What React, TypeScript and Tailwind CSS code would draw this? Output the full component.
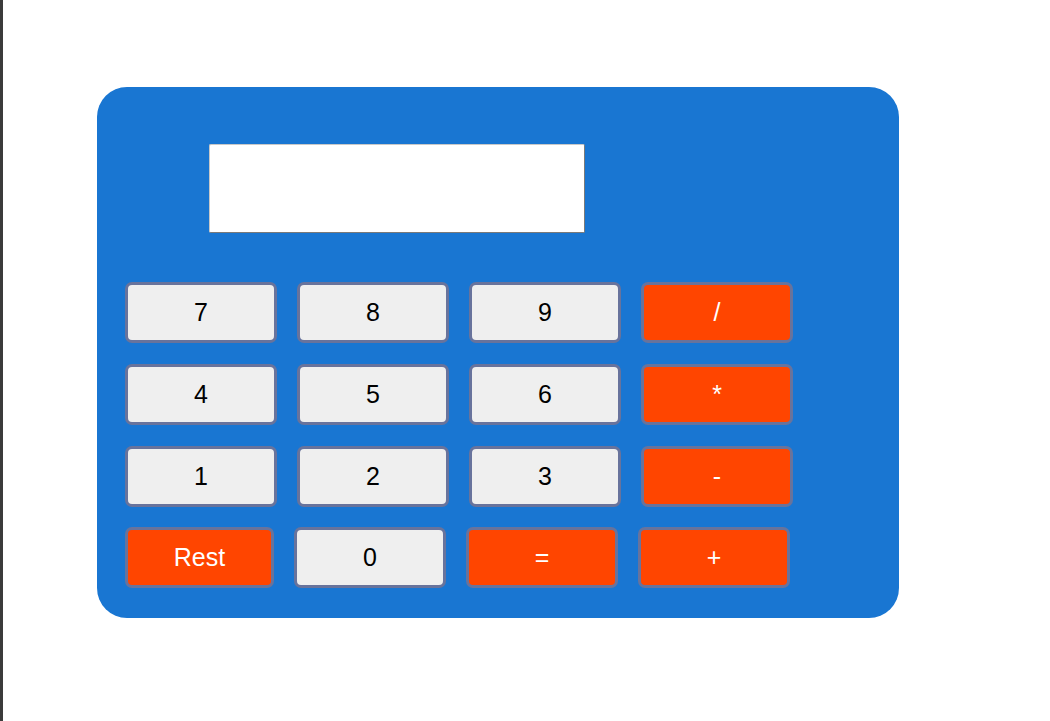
import React from "react";

type Btn = { label: string; op?: boolean; w?: string };

const rows: Btn[][] = [
  [{ label: "7" }, { label: "8" }, { label: "9" }, { label: "/", op: true }],
  [{ label: "4" }, { label: "5" }, { label: "6" }, { label: "*", op: true }],
  [{ label: "1" }, { label: "2" }, { label: "3" }, { label: "-", op: true }],
];

function Key({ label, op, w }: Btn) {
  return (
    <button
      className={
        (w ?? "w-[152px]") +
        " h-[61px] shrink-0 rounded-[7px] border-[3px] border-[#68739c] text-[25px] leading-none flex items-center justify-center " +
        (op ? "bg-[#ff4500] text-white" : "bg-[#efefef] text-black")
      }
      style={{ fontFamily: '"Liberation Sans", Arial, sans-serif' }}
    >
      {label}
    </button>
  );
}

export default function App() {
  return (
    <div className="flex h-[721px] w-full bg-white" style={{ fontFamily: '"Liberation Sans", Arial, sans-serif' }}>
      <div className="w-[3px] h-full bg-[#3b3b3b] shrink-0" />
      <div className="flex-1 pl-[94px] pt-[87px]">
        <div className="w-[802px] h-[531px] rounded-[30px] bg-[#1976d2] pl-[28px] pt-[57px]">
          <div className="ml-[84px] w-[376px] h-[89px] bg-white border border-t-[#c8c8c8] border-l-[#c8c8c8] border-r-[#7a7a7a] border-b-[#7a7a7a] rounded-[2px]" />
          <div className="mt-[49px] flex flex-col gap-[21px]">
            {rows.map((r, i) => (
              <div key={i} className="flex gap-[20px]">
                {r.map((b) => (
                  <Key key={b.label} {...b} />
                ))}
              </div>
            ))}
            <div className="flex gap-[20px] -mt-[1px]">
              <Key label="Rest" op w="w-[149px]" />
              <Key label="0" />
              <Key label="=" op />
              <Key label="+" op />
            </div>
          </div>
        </div>
      </div>
    </div>
  );
}
